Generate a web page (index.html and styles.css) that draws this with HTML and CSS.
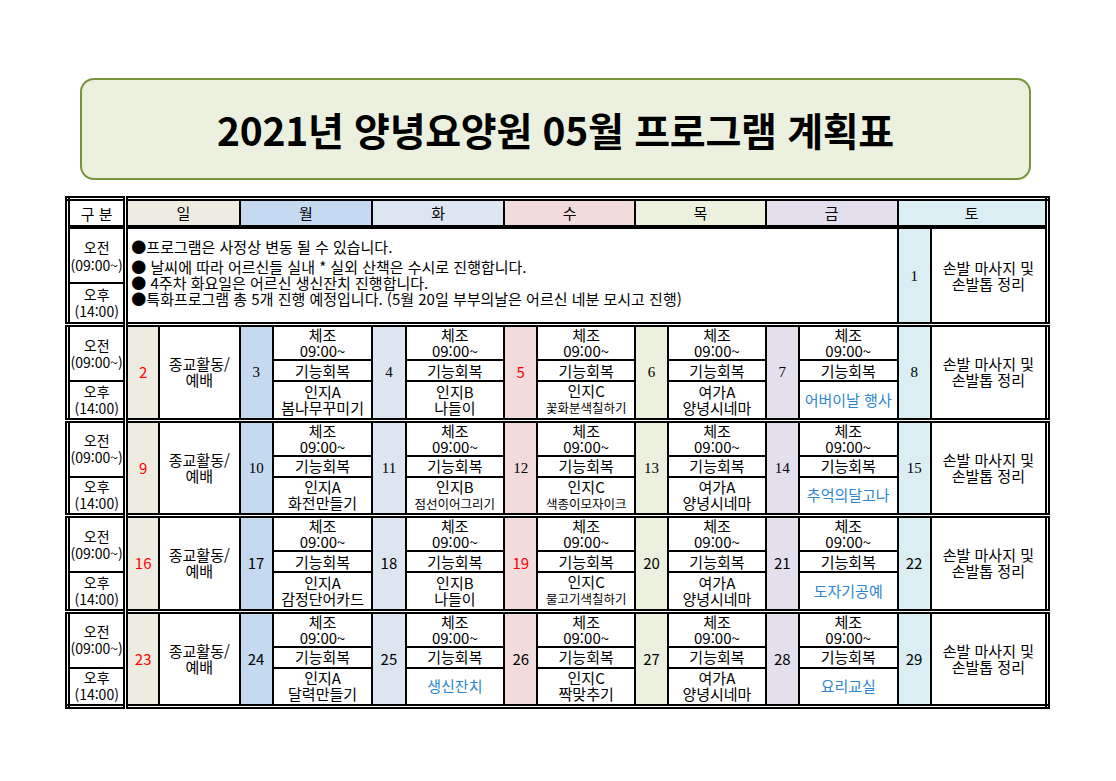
FILE: index.html
```html
<!DOCTYPE html>
<html lang="ko">
<head>
<meta charset="utf-8">
<title>2021년 양녕요양원 05월 프로그램 계획표</title>
<link rel="stylesheet" href="styles.css">
</head>
<body>
<div class="page">
  <div class="title-box"><h1 class="title">2021년 양녕요양원 05월 프로그램 계획표</h1></div>

  <table class="schedule">
    <colgroup>
      <col class="c-label">
      <col class="c-num"><col class="c-sun">
      <col class="c-num"><col class="c-day1">
      <col class="c-num"><col class="c-day2">
      <col class="c-num"><col class="c-day3">
      <col class="c-num"><col class="c-day3">
      <col class="c-num"><col class="c-day2">
      <col class="c-num"><col class="c-sat">
    </colgroup>
    <thead>
      <tr class="head">
        <th class="label">구 분</th>
        <th colspan="2" class="bg-sun">일</th>
        <th colspan="2" class="bg-mon">월</th>
        <th colspan="2" class="bg-tue">화</th>
        <th colspan="2" class="bg-wed">수</th>
        <th colspan="2" class="bg-thu">목</th>
        <th colspan="2" class="bg-fri">금</th>
        <th colspan="2" class="bg-sat">토</th>
      </tr>
    </thead>
    <tbody>
      <tr class="n1">
        <td class="label">오전<br>(09:00~)</td>
        <td colspan="12" rowspan="2" class="notes">
          <p class="l1">●프로그램은 사정상 변동 될 수 있습니다.</p>
          <p>● 날씨에 따라 어르신들 실내 * 실외 산책은 수시로 진행합니다.</p>
          <p>● 4주차 화요일은 어르신 생신잔치 진행합니다.</p>
          <p>●특화프로그램 총 5개 진행 예정입니다. (5월 20일 부부의날은 어르신 네분 모시고 진행)</p>
        </td>
        <td rowspan="2" class="num serif bg-sat">1</td>
        <td rowspan="2">손발 마사지 및<br>손발톱 정리</td>
      </tr>
      <tr class="n2">
        <td class="label">오후<br>(14:00)</td>
      </tr>

      <!-- week 2 -->
      <tr class="r1 wk">
        <td rowspan="2" class="label">오전<br>(09:00~)</td>
        <td rowspan="3" class="num red bg-sun">2</td>
        <td rowspan="3" class="up">종교활동/<br>예배</td>
        <td rowspan="3" class="num serif bg-mon">3</td>
        <td>체조<br>09:00~</td>
        <td rowspan="3" class="num serif bg-tue">4</td>
        <td>체조<br>09:00~</td>
        <td rowspan="3" class="num red bg-wed">5</td>
        <td>체조<br>09:00~</td>
        <td rowspan="3" class="num serif bg-thu">6</td>
        <td>체조<br>09:00~</td>
        <td rowspan="3" class="num serif bg-fri">7</td>
        <td>체조<br>09:00~</td>
        <td rowspan="3" class="num serif bg-sat">8</td>
        <td rowspan="3" class="up">손발 마사지 및<br>손발톱 정리</td>
      </tr>
      <tr class="r2">
        <td>기능회복</td><td>기능회복</td><td>기능회복</td><td>기능회복</td><td>기능회복</td>
      </tr>
      <tr class="r3">
        <td class="label">오후<br>(14:00)</td>
        <td>인지A<br>봄나무꾸미기</td>
        <td>인지B<br>나들이</td>
        <td>인지C<br><span class="small">꽃화분색칠하기</span></td>
        <td>여가A<br>양녕시네마</td>
        <td class="blue">어버이날 행사</td>
      </tr>

      <!-- week 3 -->
      <tr class="r1 wk">
        <td rowspan="2" class="label">오전<br>(09:00~)</td>
        <td rowspan="3" class="num red bg-sun">9</td>
        <td rowspan="3" class="up">종교활동/<br>예배</td>
        <td rowspan="3" class="num serif bg-mon">10</td>
        <td>체조<br>09:00~</td>
        <td rowspan="3" class="num serif bg-tue">11</td>
        <td>체조<br>09:00~</td>
        <td rowspan="3" class="num serif bg-wed">12</td>
        <td>체조<br>09:00~</td>
        <td rowspan="3" class="num serif bg-thu">13</td>
        <td>체조<br>09:00~</td>
        <td rowspan="3" class="num serif bg-fri">14</td>
        <td>체조<br>09:00~</td>
        <td rowspan="3" class="num serif bg-sat">15</td>
        <td rowspan="3" class="up">손발 마사지 및<br>손발톱 정리</td>
      </tr>
      <tr class="r2">
        <td>기능회복</td><td>기능회복</td><td>기능회복</td><td>기능회복</td><td>기능회복</td>
      </tr>
      <tr class="r3">
        <td class="label">오후<br>(14:00)</td>
        <td>인지A<br>화전만들기</td>
        <td>인지B<br><span class="small">점선이어그리기</span></td>
        <td>인지C<br><span class="small">색종이모자이크</span></td>
        <td>여가A<br>양녕시네마</td>
        <td class="blue">추억의달고나</td>
      </tr>

      <!-- week 4 -->
      <tr class="r1 wk">
        <td rowspan="2" class="label">오전<br>(09:00~)</td>
        <td rowspan="3" class="num red bg-sun">16</td>
        <td rowspan="3" class="up">종교활동/<br>예배</td>
        <td rowspan="3" class="num bg-mon">17</td>
        <td>체조<br>09:00~</td>
        <td rowspan="3" class="num bg-tue">18</td>
        <td>체조<br>09:00~</td>
        <td rowspan="3" class="num red bg-wed">19</td>
        <td>체조<br>09:00~</td>
        <td rowspan="3" class="num bg-thu">20</td>
        <td>체조<br>09:00~</td>
        <td rowspan="3" class="num bg-fri">21</td>
        <td>체조<br>09:00~</td>
        <td rowspan="3" class="num bg-sat">22</td>
        <td rowspan="3" class="up">손발 마사지 및<br>손발톱 정리</td>
      </tr>
      <tr class="r2">
        <td>기능회복</td><td>기능회복</td><td>기능회복</td><td>기능회복</td><td>기능회복</td>
      </tr>
      <tr class="r3">
        <td class="label">오후<br>(14:00)</td>
        <td>인지A<br>감정단어카드</td>
        <td>인지B<br>나들이</td>
        <td>인지C<br><span class="small">물고기색칠하기</span></td>
        <td>여가A<br>양녕시네마</td>
        <td class="blue">도자기공예</td>
      </tr>

      <!-- week 5 -->
      <tr class="r1 wk">
        <td rowspan="2" class="label">오전<br>(09:00~)</td>
        <td rowspan="3" class="num red bg-sun">23</td>
        <td rowspan="3" class="up">종교활동/<br>예배</td>
        <td rowspan="3" class="num bg-mon">24</td>
        <td>체조<br>09:00~</td>
        <td rowspan="3" class="num bg-tue">25</td>
        <td>체조<br>09:00~</td>
        <td rowspan="3" class="num bg-wed">26</td>
        <td>체조<br>09:00~</td>
        <td rowspan="3" class="num bg-thu">27</td>
        <td>체조<br>09:00~</td>
        <td rowspan="3" class="num bg-fri">28</td>
        <td>체조<br>09:00~</td>
        <td rowspan="3" class="num bg-sat">29</td>
        <td rowspan="3" class="up">손발 마사지 및<br>손발톱 정리</td>
      </tr>
      <tr class="r2">
        <td>기능회복</td><td>기능회복</td><td>기능회복</td><td>기능회복</td><td>기능회복</td>
      </tr>
      <tr class="r3">
        <td class="label">오후<br>(14:00)</td>
        <td>인지A<br>달력만들기</td>
        <td class="blue">생신잔치</td>
        <td>인지C<br>짝맞추기</td>
        <td>여가A<br>양녕시네마</td>
        <td class="blue">요리교실</td>
      </tr>
    </tbody>
  </table>
</div>
</body>
</html>
```

FILE: styles.css
```css
html, body {
  margin: 0;
  padding: 0;
  background: #ffffff;
}

body {
  font-family: "Noto Sans CJK KR", "Noto Sans", sans-serif;
  color: #000000;
}

.page {
  padding-top: 78px;
}

.title-box {
  margin-left: 80px;
  width: 951px;
  height: 102px;
  box-sizing: border-box;
  border: 2px solid #77933c;
  border-radius: 14px;
  background: #ebf1de;
  display: flex;
  align-items: center;
  justify-content: center;
}

.title {
  margin: 0;
  font-size: 39px;
  font-weight: 700;
  letter-spacing: -0.3px;
  line-height: 1;
}

.schedule {
  margin: 16px 0 0 65px;
  width: 985px;
  table-layout: fixed;
  border-collapse: collapse;
  border: 5px double #000000;
}

.c-label { width: 58px; }
.c-num { width: 33px; }
.c-sun { width: 80px; }
.c-day1 { width: 99px; }
.c-day2 { width: 98px; }
.c-day3 { width: 97px; }
.c-sat { width: 116px; }

.schedule th,
.schedule td {
  border: 2px solid #000000;
  padding: 0;
  text-align: center;
  vertical-align: middle;
  font-size: 15px;
  line-height: 16px;
  font-weight: 400;
  white-space: nowrap;
  overflow: hidden;
}

.schedule .label {
  border-right: 5px double #000000;
  font-size: 14px;
  line-height: 17px;
}

.schedule .head th {
  height: 24px;
  border-bottom: 4px solid #000000;
  font-size: 15px;
}

.n1 td { height: 53px; }
.n2 td { height: 38px; }

.schedule .n1 .label { line-height: 18px; }

.wk td {
  border-top: 5px double #000000;
}

.r1 { height: 32px; }
.r2 { height: 21px; }
.r3 { height: 39px; }

.schedule .notes {
  text-align: left;
  padding: 0 0 5px 3px;
  vertical-align: middle;
}

.notes p {
  margin: 0;
  font-size: 15px;
  line-height: 16px;
}

.notes .l1 {
  margin-bottom: 4px;
}

.up {
  padding-bottom: 6px;
}

.schedule .serif {
  font-family: "Liberation Serif", "Times New Roman", serif;
  font-size: 15px;
}

.red { color: #ff0000; }
.blue { color: #2e86d1; }

.small {
  font-size: 12.5px;
}

.bg-sun { background: #eeece1; }
.bg-mon { background: #c5d9f1; }
.bg-tue { background: #dce6f1; }
.bg-wed { background: #f2dcdb; }
.bg-thu { background: #ebf1de; }
.bg-fri { background: #e4dfec; }
.bg-sat { background: #daeef3; }
```
